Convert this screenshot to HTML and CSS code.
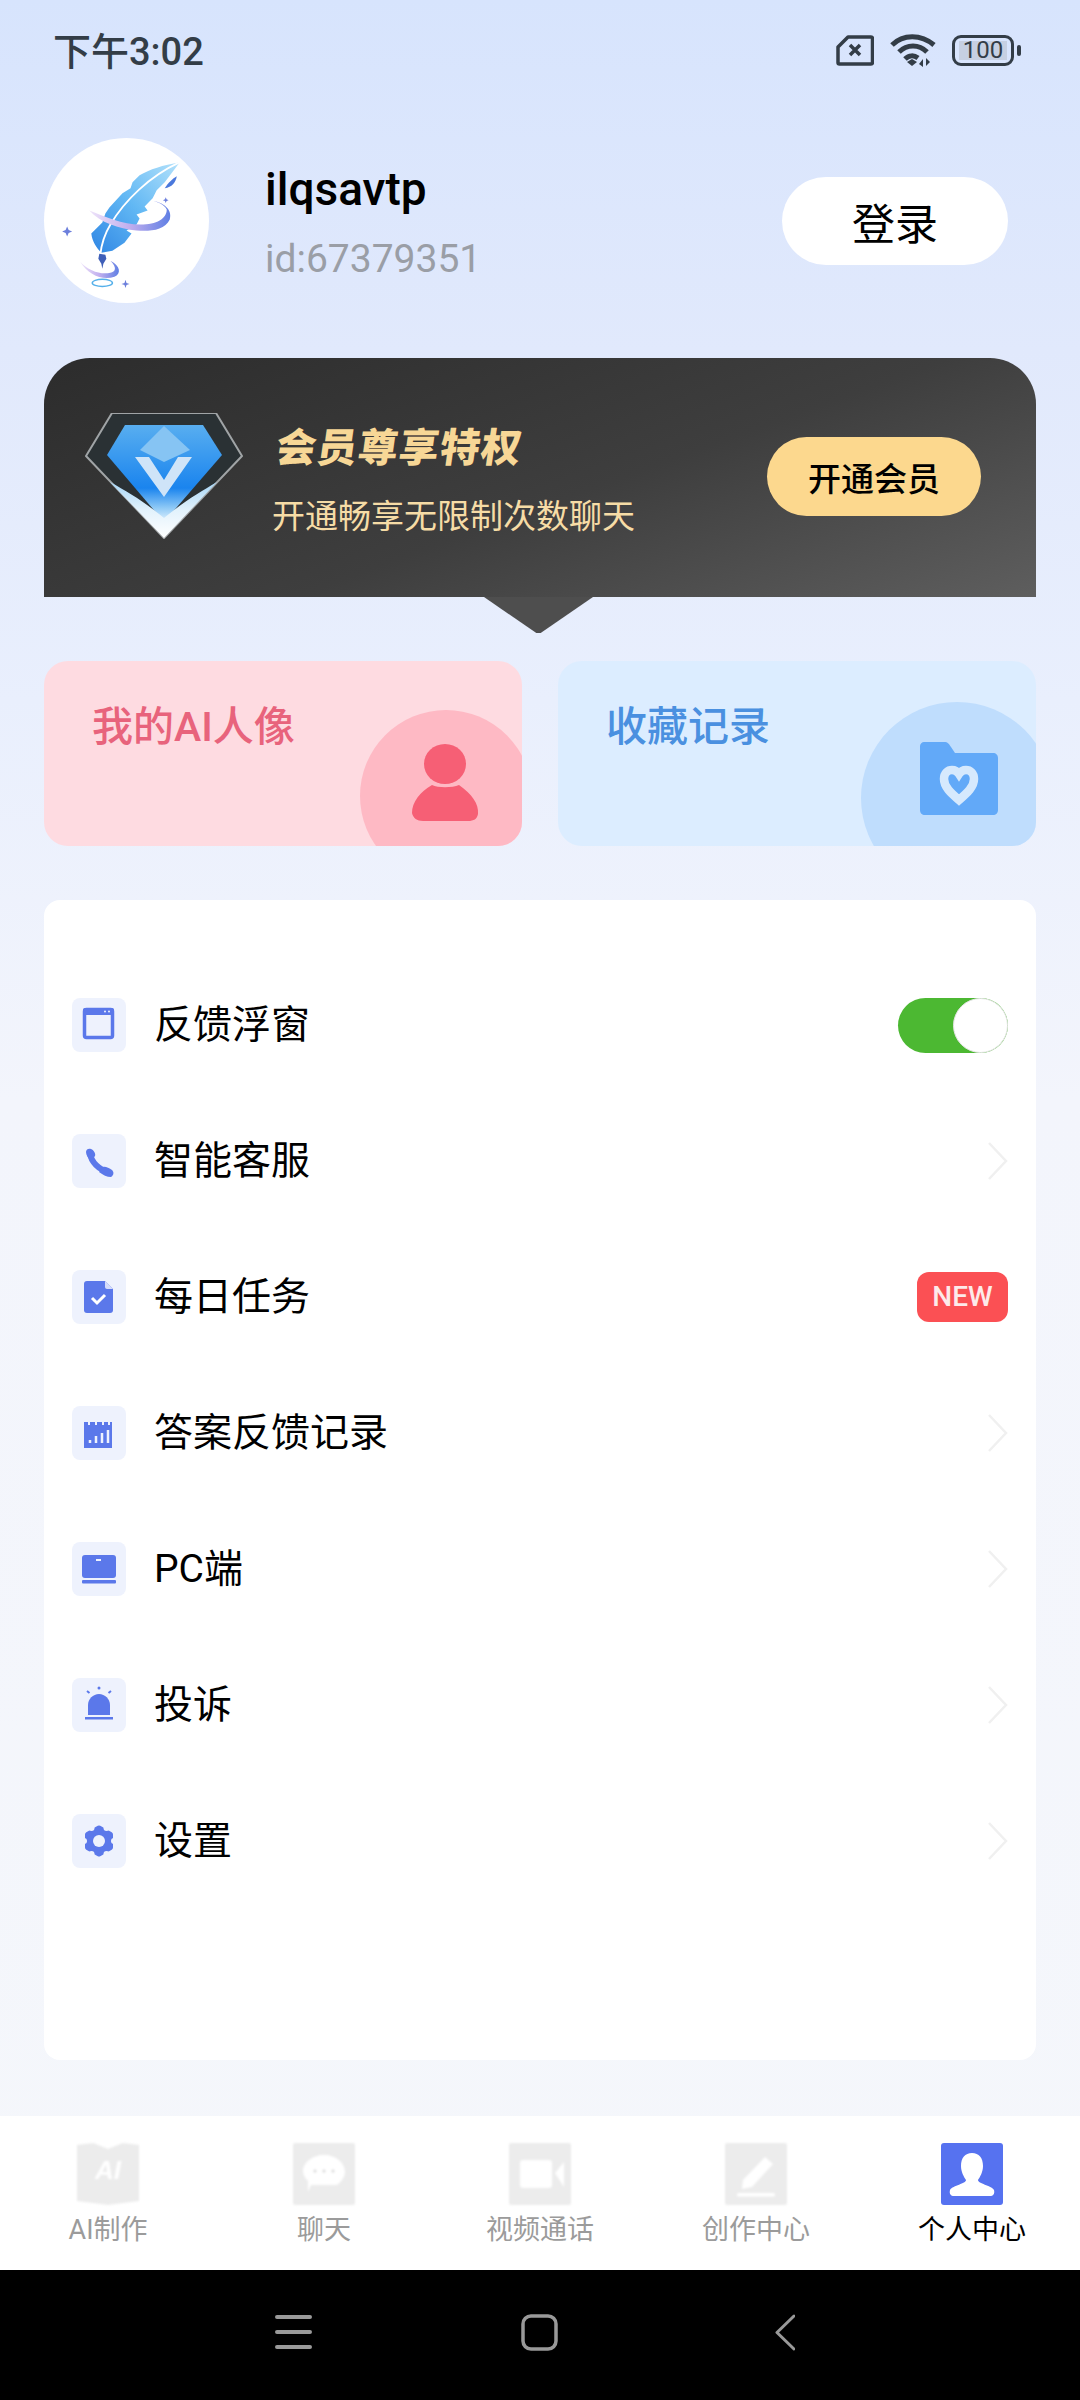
FILE: index.html
```html
<!DOCTYPE html>
<html lang="zh-CN">
<head>
  <meta charset="UTF-8" />
  <meta name="viewport" content="width=device-width, initial-scale=1.0" />
  <title>个人中心</title>
  <link rel="stylesheet" href="styles.css">
</head>
<body>
  <div class="status-bar">
    <div class="time">下午3:02</div>
    <div class="status-icons">
      <svg width="38" height="31" viewBox="0 0 38 31">
        <path d="M12 2H35a1.500 1.500 0 0 1 1.500 1.500V27.500A1.500 1.500 0 0 1 35 29H3.500A1.500 1.500 0 0 1 2 27.500V12Z" fill="none" stroke="#333d47" stroke-width="3.500" stroke-linejoin="round" />
        <path d="M14 10l10 10M24 10l-10 10" stroke="#333d47" stroke-width="3.500" />
      </svg>
      <svg width="46" height="33" viewBox="0 0 46 33">
        <path d="M2 11C13 0 31 0 44 11" fill="none" stroke="#333d47" stroke-width="5" />
        <path d="M9 18C17 10 29 10 37 18" fill="none" stroke="#333d47" stroke-width="5" />
        <path d="M15 25C19 21 24 21 28 24" fill="none" stroke="#333d47" stroke-width="5" />
        <path d="M17 28l5-3 5 3-5 4z" fill="#333d47" />
        <path d="M33 33v-8l-4 5zM36 24v8l4-4z" fill="#333d47" />
      </svg>
      <div class="battery">
        <div class="battery-body"><span class="battery-level">100</span></div>
        <div class="battery-nub"></div>
      </div>
    </div>
  </div>

  <main class="content">
    <section class="profile">
      <div class="avatar">
        <svg width="165" height="165" viewBox="0 0 164 164">
          <defs>
            <linearGradient id="feather" x1="1" y1="0" x2="0" y2="1">
              <stop offset="0" stop-color="#b4e2fb" />
              <stop offset="0.5" stop-color="#62b8f4" />
              <stop offset="1" stop-color="#2f86e4" />
            </linearGradient>
            <linearGradient id="ribbon" x1="0" y1="0" x2="1" y2="0">
              <stop offset="0" stop-color="#efe4fa" />
              <stop offset="0.5" stop-color="#c0aeee" />
              <stop offset="1" stop-color="#5f7fe4" />
            </linearGradient>
          </defs>
          <path d="M135 24C118 27 105 31 95 37L88 44 86 50 78 55 65 69 61 75 58 84 47 95C48 103 52 109 57 114L68 112 80 104 87 95 82 92 92 86 95 80 92 76 103 72 100 68 108 60 112 52 120 44Z" fill="url(#feather)" />
          <path d="M135 24C105 38 80 62 66 86 60 96 57 106 56 116" fill="none" stroke="#fff" stroke-width="1.800" />
          <path d="M45 72C60 78 78 86 96 86 112 86 122 80 122 71 120 66 112 63 107 62 118 64 128 70 125 81 120 92 105 93 92 92 74 90 56 84 45 72Z" fill="url(#ribbon)" />
          <path d="M55 115l6 1 1 4-3 5-1 5-1-5-3-5z" fill="#3f5fb8" />
          <path d="M36 123C44 132 56 136 66 134 71 133 73 129 66 122 76 127 77 135 70 138 58 142 44 136 36 123Z" fill="url(#ribbon)" />
          <ellipse cx="58" cy="144" rx="10" ry="3.500" fill="none" stroke="#55b0ea" stroke-width="1.500" />
          <path d="M23 88l1.500 3.500 3.500 1.500-3.500 1.500L23 98l-1.500-3.500L18 93l3.500-1.500zM81 141l1 3 3 1-3 1-1 3-1-3-3-1 3-1zM121 59l.800 2 2 .800-2 .800-.800 2-.800-2-2-.800 2-.800z" fill="#6c7fdc" />
          <path d="M120 50C123 45 128 40 132 38 131 44 127 49 120 50Z" fill="#4a78dc" />
        </svg>
      </div>
      <div class="user-info">
        <div class="user-name">ilqsavtp</div>
        <div class="user-id">id:67379351</div>
      </div>
      <button class="login-button">登录</button>
    </section>

    <section class="vip-banner">
      <svg class="vip-badge" width="158" height="127" viewBox="15 13 158 127">
        <defs>
          <linearGradient id="gem" x1="0" y1="0" x2="0" y2="1">
            <stop offset="0" stop-color="#58aef0" />
            <stop offset="0.65" stop-color="#1a84ee" />
            <stop offset="0.85" stop-color="#8cc8f6" />
            <stop offset="1" stop-color="#e4f3fd" />
          </linearGradient>
          <linearGradient id="gemTail" x1="0" y1="0" x2="0" y2="1">
            <stop offset="0" stop-color="#a8d6f6" />
            <stop offset="0.5" stop-color="#e2f2fc" />
            <stop offset="1" stop-color="#ffffff" />
          </linearGradient>
        </defs>
        <path d="M42 13H146L172 56 94 138 16 56Z" fill="#2a3134" stroke="#a0a4a6" stroke-width="2" stroke-linejoin="round" />
        <path d="M55 25H133L152 55 94 122 37 55Z" fill="url(#gem)" />
        <path d="M94 26L120 50 94 62 70 50Z" fill="#86c4f3" />
        <path d="M40 82C58 92 72 100 94 118 116 100 130 92 147 82L94 138Z" fill="url(#gemTail)" />
        <path d="M65 57H79L94 80 108 57H122L94 97Z" fill="#cfe4f8" />
      </svg>
      <div class="vip-text">
        <div class="vip-title">会员尊享特权</div>
        <div class="vip-desc">开通畅享无限制次数聊天</div>
      </div>
      <button class="vip-button">开通会员</button>
      <div class="vip-tail"></div>
    </section>

    <section class="shortcut-cards">
      <div class="shortcut-card pink">
        <div class="card-title">我的AI人像</div>
        <div class="card-circle"></div>
        <svg class="card-icon" width="67" height="77" viewBox="0 0 67 77">
          <ellipse cx="33" cy="20" rx="21" ry="20" fill="#f65f75" />
          <path d="M20 41C26 44 40 44 47 41 60 50 67 60 66 70 65 75 62 77 56 77H11C5 77 1 74 0 69 0 58 8 48 20 41Z" fill="#f65f75" />
        </svg>
      </div>
      <div class="shortcut-card blue">
        <div class="card-title">收藏记录</div>
        <div class="card-circle"></div>
        <svg class="card-icon" width="78" height="73" viewBox="0 0 78 73">
          <path d="M4 0H24C28 0 29 2 31 5L35 11H73C76 11 78 13 78 16V68C78 71 76 73 73 73H5C2 73 0 71 0 68V4C0 2 2 0 4 0Z" fill="#62a9f8" />
          <path d="M39 58C31 51 24 45 24 37 24 31 28 28 32 28 35 28 37 29 39 32 41 29 43 28 46 28 50 28 54 31 54 37 54 45 47 51 39 58Z" fill="none" stroke="#d6e9fd" stroke-width="8.500" />
        </svg>
      </div>
    </section>

    <section class="menu-card">
      <div class="menu-row">
        <div class="menu-icon">
          <svg width="54" height="54" viewBox="0 0 54 54">
            <rect x="12.500" y="11.500" width="28" height="28" rx="2" fill="none" stroke="#5b78ea" stroke-width="3.500" />
            <rect x="11" y="10" width="31" height="7" rx="2" fill="#5b78ea" />
            <circle cx="33" cy="13.500" r="1" fill="#eef2fd" />
            <circle cx="37" cy="13.500" r="1" fill="#eef2fd" />
          </svg>
        </div>
        <div class="menu-label">反馈浮窗</div>
        <div class="switch"><div class="switch-knob"></div></div>
      </div>
      <div class="menu-row">
        <div class="menu-icon">
          <svg width="54" height="54" viewBox="0 0 54 54">
            <path d="M18 19C19 28 27 36 37 38" fill="none" stroke="#5b78ea" stroke-width="6" />
            <path d="M14 18C14 15 17 14 19 15 22 16 24 20 23 22L19 27C16 24 14 21 14 18Z" fill="#5b78ea" />
            <path d="M31 33C33 32 37 34 40 36 42 38 42 41 39 43 35 43 31 41 27 38Z" fill="#5b78ea" />
          </svg>
        </div>
        <div class="menu-label">智能客服</div>
        <svg class="chevron" width="21" height="38" viewBox="0 0 21 38"><path d="M2 1L19 19 2 37" /></svg>
      </div>
      <div class="menu-row">
        <div class="menu-icon">
          <svg width="54" height="54" viewBox="0 0 54 54">
            <path d="M15 11H33L41 19V40C41 42 40 43 38 43H15C13 43 12 42 12 40V14C12 12 13 11 15 11Z" fill="#5b78ea" />
            <path d="M33 11L41 19H35C34 19 33 18 33 17Z" fill="#d5dcfa" />
            <path d="M20 28L25 33 33 25" fill="none" stroke="#fff" stroke-width="3" />
          </svg>
        </div>
        <div class="menu-label">每日任务</div>
        <div class="new-badge">NEW</div>
      </div>
      <div class="menu-row">
        <div class="menu-icon">
          <svg width="54" height="54" viewBox="0 0 54 54">
            <rect x="12" y="16" width="28" height="26" fill="#5b78ea" />
            <path d="M17 14v5M24 14v5M31 14v5M37 14v5" stroke="#eef2fd" stroke-width="2" />
            <path d="M18 37v-3M24 37v-7M30 37v-10M36 37v-13" stroke="#eef2fd" stroke-width="2.500" />
          </svg>
        </div>
        <div class="menu-label">答案反馈记录</div>
        <svg class="chevron" width="21" height="38" viewBox="0 0 21 38"><path d="M2 1L19 19 2 37" /></svg>
      </div>
      <div class="menu-row">
        <div class="menu-icon">
          <svg width="54" height="54" viewBox="0 0 54 54">
            <rect x="10" y="13" width="34" height="23" rx="3" fill="#5b78ea" />
            <rect x="24" y="17" width="5" height="2" fill="#eef2fd" />
            <rect x="10" y="38" width="34" height="3.500" rx="1" fill="#5b78ea" />
          </svg>
        </div>
        <div class="menu-label">PC端</div>
        <svg class="chevron" width="21" height="38" viewBox="0 0 21 38"><path d="M2 1L19 19 2 37" /></svg>
      </div>
      <div class="menu-row">
        <div class="menu-icon">
          <svg width="54" height="54" viewBox="0 0 54 54">
            <path d="M16 37V27C16 21 21 16 27 16 33 16 38 21 38 27V37Z" fill="#5b78ea" />
            <rect x="13" y="39" width="28" height="2.500" fill="#5b78ea" />
            <circle cx="27" cy="10" r="1.500" fill="#5b78ea" />
            <path d="M15 13l2.500 2M39 13l-2.500 2" stroke="#5b78ea" stroke-width="2" />
          </svg>
        </div>
        <div class="menu-label">投诉</div>
        <svg class="chevron" width="21" height="38" viewBox="0 0 21 38"><path d="M2 1L19 19 2 37" /></svg>
      </div>
      <div class="menu-row">
        <div class="menu-icon">
          <svg width="54" height="54" viewBox="0 0 54 54">
            <path d="M27 14L38.500 20.500V33.500L27 40 15.500 33.500V20.500Z" fill="#5b78ea" stroke="#5b78ea" stroke-width="5" stroke-linejoin="round" />
            <!-- notches between the gear teeth -->
            <g fill="#eef2fd">
              <circle cx="42" cy="27" r="3" />
              <circle cx="34.500" cy="14" r="3" />
              <circle cx="19.500" cy="14" r="3" />
              <circle cx="12" cy="27" r="3" />
              <circle cx="19.500" cy="40" r="3" />
              <circle cx="34.500" cy="40" r="3" />
              <circle cx="27" cy="27" r="6" />
            </g>
          </svg>
        </div>
        <div class="menu-label">设置</div>
        <svg class="chevron" width="21" height="38" viewBox="0 0 21 38"><path d="M2 1L19 19 2 37" /></svg>
      </div>
    </section>
  </main>

  <nav class="tab-bar">
    <div class="tab">
      <svg class="tab-icon" width="62" height="62" viewBox="0 0 62 62">
        <path d="M0 2L16 0 31 6 46 0 62 2V58L46 60 31 62 16 60 0 58Z" fill="#ececec" />
        <text class="tab-icon-text" x="31" y="36" text-anchor="middle">AI</text>
      </svg>
      <div class="tab-label">AI制作</div>
    </div>
    <div class="tab">
      <svg class="tab-icon" width="62" height="62" viewBox="0 0 62 62">
        <rect width="62" height="62" rx="2" fill="#ececec" />
        <path d="M31 12C43 12 52 20 52 29 52 34 48 39 44 42H18L15 49V38C12 35 10 32 10 28 10 20 19 12 31 12Z" fill="#fff" />
        <circle cx="22" cy="28" r="1.500" fill="#d8d8d8" />
        <circle cx="31" cy="28" r="1.500" fill="#d8d8d8" />
        <circle cx="40" cy="28" r="1.500" fill="#d8d8d8" />
      </svg>
      <div class="tab-label">聊天</div>
    </div>
    <div class="tab">
      <svg class="tab-icon" width="62" height="62" viewBox="0 0 62 62">
        <rect width="62" height="62" rx="2" fill="#ececec" />
        <rect x="11" y="17" width="32" height="28" rx="3" fill="#fff" />
        <path d="M46 30L55 19V44Z" fill="#fff" />
      </svg>
      <div class="tab-label">视频通话</div>
    </div>
    <div class="tab">
      <svg class="tab-icon" width="62" height="62" viewBox="0 0 62 62">
        <rect width="62" height="62" rx="2" fill="#ececec" />
        <path d="M40 14L48 21 27 44 17 46 18 37Z" fill="#fff" />
        <rect x="12" y="50" width="38" height="3.500" rx="1.500" fill="#fff" />
      </svg>
      <div class="tab-label">创作中心</div>
    </div>
    <div class="tab active">
      <svg class="tab-icon" width="62" height="62" viewBox="0 0 62 62">
        <rect width="62" height="62" rx="3" fill="#5672f0" />
        <path d="M31 10C38 10 42 15 42 23 42 29 39 34 37 37 37 41 50 42 53 47 54 51 52 53 49 53H13C10 53 8 51 9 47 12 42 25 41 25 37 23 34 20 29 20 23 20 15 24 10 31 10Z" fill="#fff" />
      </svg>
      <div class="tab-label">个人中心</div>
    </div>
  </nav>

  <div class="nav-bar">
    <svg width="37" height="36" viewBox="0 0 37 36">
      <path d="M2 3H35M2 18H35M2 33H35" stroke="#999" stroke-width="4" stroke-linecap="round" />
    </svg>
    <svg width="37" height="37" viewBox="0 0 37 37">
      <rect x="2" y="2" width="33" height="33" rx="8" fill="none" stroke="#999" stroke-width="3.500" />
    </svg>
    <svg width="28" height="37" viewBox="0 0 28 37">
      <path d="M27 2L10 18.500 27 35" fill="none" stroke="#999" stroke-width="3" stroke-linecap="round" stroke-linejoin="round" />
    </svg>
  </div>
</body>
</html>
```

FILE: styles.css
```css
* {
  box-sizing: border-box;
}

body {
  margin: 0;
  width: 1080px;
  height: 2400px;
  display: flex;
  flex-direction: column;
  overflow: hidden;
  font-family: Roboto, "Noto Sans CJK SC", sans-serif;
  color: #000;
  background: linear-gradient(#d7e4fd 0, #e1e9fc 350px, #e9effd 700px, #f3f5fc 1100px, #f5f7fb 100%);
}

button {
  border: none;
  font-family: inherit;
  padding: 0;
}

.status-bar {
  height: 100px;
  padding: 0 59px 4px 53px;
  display: flex;
  align-items: center;
  justify-content: space-between;
}

.time {
  font-size: 38px;
  font-weight: 500;
  color: #333d47;
}

.status-icons {
  display: flex;
  align-items: center;
  gap: 16px;
  margin-top: 4px;
}

.battery {
  display: flex;
  align-items: center;
  gap: 3px;
}

.battery-body {
  width: 62px;
  height: 31px;
  padding: 3px 4px;
  display: flex;
  border: 3px solid #333d47;
  border-radius: 9px;
}

.battery-level {
  flex: 1;
  font-size: 24px;
  line-height: 19px;
  text-align: center;
  color: #333d47;
  background: #c6d0e2;
}

.battery-nub {
  width: 4px;
  height: 11px;
  border-radius: 2px;
  background: #333d47;
}

.content {
  padding: 38px 44px 0;
}

.profile {
  height: 165px;
  display: flex;
  align-items: center;
  padding-right: 28px;
}

.avatar {
  width: 165px;
  height: 165px;
  border-radius: 50%;
  background: #fff;
  flex-shrink: 0;
}

.user-info {
  margin-left: 56px;
}

.user-name {
  font-size: 46px;
  line-height: 56px;
  font-weight: 500;
}

.user-id {
  margin-top: 20px;
  font-size: 39px;
  line-height: 44px;
  color: #9a9ea6;
}

.login-button {
  margin-left: auto;
  width: 226px;
  height: 88px;
  border-radius: 44px;
  background: #fff;
  font-size: 43px;
  color: #000;
}

.vip-banner {
  position: relative;
  height: 239px;
  margin-top: 55px;
  padding: 55px 55px 0 41px;
  display: flex;
  align-items: flex-start;
  border-radius: 46px 46px 0 0;
  background: linear-gradient(160deg, #2c2c2c 0%, #3e3e3e 55%, #5e5e5e 100%);
}

.vip-text {
  margin-left: 33px;
  margin-top: 11px;
}

.vip-title {
  font-size: 40px;
  line-height: 50px;
  font-weight: 900;
  letter-spacing: 1px;
  transform: skewX(-8deg);
  color: #f7d796;
}

.vip-desc {
  margin-top: 21px;
  margin-left: -4px;
  font-size: 33px;
  line-height: 44px;
  color: #f6dca6;
}

.vip-button {
  margin-left: auto;
  margin-top: 24px;
  width: 214px;
  height: 79px;
  border-radius: 40px;
  background: #fcd88e;
  font-size: 33px;
  font-weight: 500;
  color: #000;
}

.vip-tail {
  position: absolute;
  left: 440px;
  bottom: -36px;
  width: 109px;
  height: 36px;
  clip-path: polygon(0 0, 100% 0, 52% 100%, 48% 100%);
  background: #4e4e4e;
}

.shortcut-cards {
  margin-top: 64px;
  display: grid;
  grid-template-columns: 478px 478px;
  gap: 36px;
}

.shortcut-card {
  position: relative;
  height: 185px;
  padding: 42px 48px;
  overflow: hidden;
  border-radius: 24px;
}

.card-title {
  font-size: 41px;
  line-height: 48px;
  font-weight: 500;
}

.card-circle {
  position: absolute;
  border-radius: 50%;
}

.card-icon {
  position: absolute;
}

.shortcut-card.pink {
  background: #fedbe1;
}

.pink .card-title {
  color: #e8637c;
}

.pink .card-circle {
  left: 316px;
  top: 49px;
  width: 172px;
  height: 172px;
  background: #feb9c4;
}

.pink .card-icon {
  left: 368px;
  top: 83px;
}

.shortcut-card.blue {
  background: #dcedff;
}

.blue .card-title {
  color: #4a90e0;
}

.blue .card-circle {
  left: 303px;
  top: 41px;
  width: 192px;
  height: 192px;
  background: #bfddfd;
}

.blue .card-icon {
  left: 362px;
  top: 81px;
}

.menu-card {
  margin-top: 54px;
  height: 1160px;
  padding: 57px 28px 0;
  border-radius: 16px;
  background: #fff;
}

.menu-row {
  height: 136px;
  display: flex;
  align-items: center;
}

.menu-icon {
  width: 54px;
  height: 54px;
  border-radius: 8px;
  background: #eef2fd;
  flex-shrink: 0;
}

.menu-icon svg {
  display: block;
}

.menu-label {
  margin-left: 28px;
  font-size: 39px;
  line-height: 48px;
}

.switch {
  margin-left: auto;
  width: 110px;
  height: 55px;
  border-radius: 28px;
  background: #4cb832;
  display: flex;
  justify-content: flex-end;
}

.switch-knob {
  width: 55px;
  height: 55px;
  border-radius: 50%;
  background: #fff;
  border: 1px solid #e4e4e4;
}

.chevron {
  margin-left: auto;
  fill: none;
  stroke: #f0f0f0;
  stroke-width: 2.500;
}

.new-badge {
  margin-left: auto;
  width: 91px;
  height: 50px;
  border-radius: 12px;
  background: #fb5054;
  font-family: Roboto, sans-serif;
  font-size: 28px;
  font-weight: 500;
  line-height: 50px;
  text-align: center;
  color: #fdeaea;
}

.tab-bar {
  margin-top: auto;
  height: 154px;
  display: grid;
  grid-template-columns: repeat(5, 1fr);
  background: #fff;
}

.tab {
  padding-top: 27px;
  display: flex;
  flex-direction: column;
  align-items: center;
}

.tab-icon {
  flex-shrink: 0;
  filter: blur(1px);
}

.tab.active .tab-icon {
  filter: none;
}

.tab-icon-text {
  font-family: "Liberation Sans", sans-serif;
  font-size: 26px;
  font-weight: bold;
  font-style: italic;
  fill: #fff;
}

.tab-label {
  margin-top: 7px;
  font-size: 27px;
  line-height: 36px;
  color: #9b9b9b;
}

.tab.active .tab-label {
  color: #000;
}

.nav-bar {
  height: 130px;
  padding: 0 0 6px 275px;
  display: flex;
  align-items: center;
  gap: 209px;
  background: #000;
}
```
